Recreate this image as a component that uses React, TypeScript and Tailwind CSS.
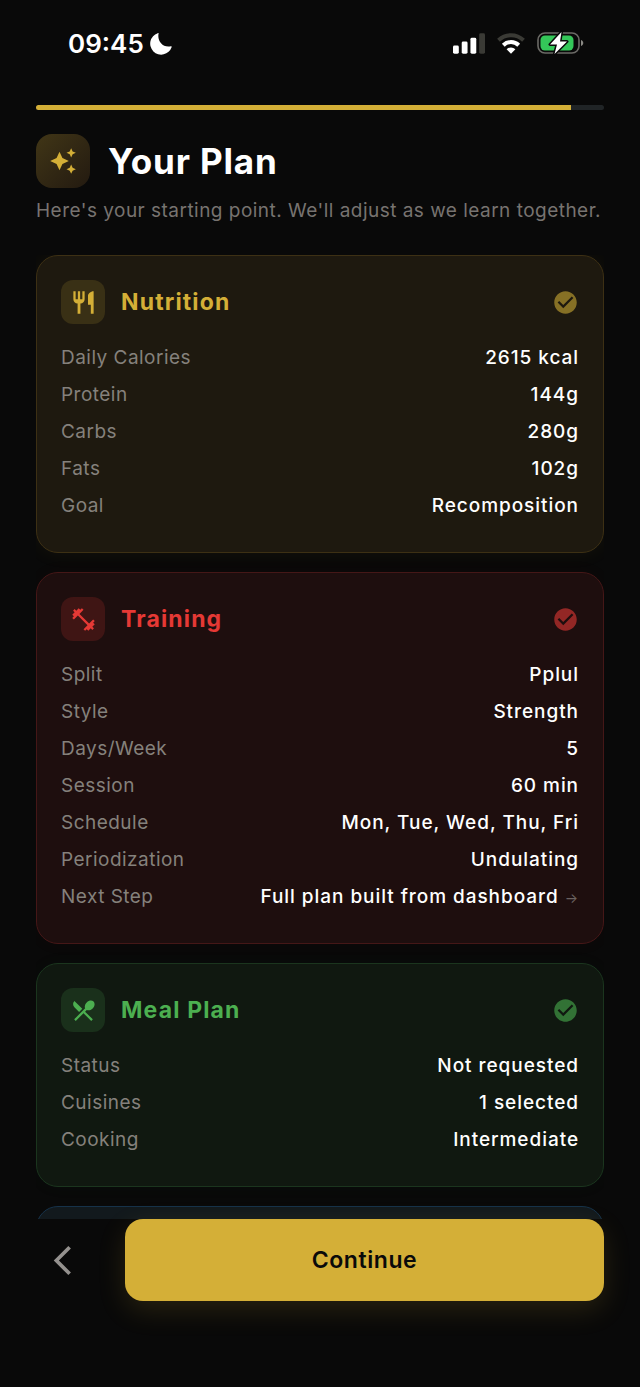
import type { ReactNode } from "react";
import {
  MdArrowBackIosNew,
  MdAutoAwesome,
  MdCheckCircle,
  MdFitnessCenter,
  MdRestaurant,
  MdRestaurantMenu,
} from "react-icons/md";

type Section = {
  title: string;
  icon: ReactNode;
  card: string;
  tile: string;
  accent: string;
  check: string;
  rows: { label: string; value: string; arrow?: boolean }[];
};

const sections: Section[] = [
  {
    title: "Nutrition",
    icon: <MdRestaurant className="size-[27px]" />,
    card: "border-[#3d3014] bg-[#1e190f] shadow-[0_0_20px_#d4af3710]",
    tile: "bg-[#393015]",
    accent: "text-[#d4af37]",
    check: "text-[#867025]",
    rows: [
      { label: "Daily Calories", value: "2615 kcal" },
      { label: "Protein", value: "144g" },
      { label: "Carbs", value: "280g" },
      { label: "Fats", value: "102g" },
      { label: "Goal", value: "Recomposition" },
    ],
  },
  {
    title: "Training",
    icon: <MdFitnessCenter className="size-[27px]" />,
    card: "border-[#451717] bg-[#1e0e0e] shadow-[0_0_20px_#e5393508]",
    tile: "bg-[#3f1514]",
    accent: "text-[#e53935]",
    check: "text-[#932725]",
    rows: [
      { label: "Split", value: "Pplul" },
      { label: "Style", value: "Strength" },
      { label: "Days/Week", value: "5" },
      { label: "Session", value: "60 min" },
      { label: "Schedule", value: "Mon, Tue, Wed, Thu, Fri" },
      { label: "Periodization", value: "Undulating" },
      { label: "Next Step", value: "Full plan built from dashboard", arrow: true },
    ],
  },
  {
    title: "Meal Plan",
    icon: <MdRestaurantMenu className="size-[27px]" />,
    card: "border-[#1b351e] bg-[#101810] shadow-[0_0_20px_#4caf5008]",
    tile: "bg-[#1a301b]",
    accent: "text-[#4caf50]",
    check: "text-[#327235]",
    rows: [
      { label: "Status", value: "Not requested" },
      { label: "Cuisines", value: "1 selected" },
      { label: "Cooking", value: "Intermediate" },
    ],
  },
];

function StatusBar() {
  return (
    <div className="flex h-[105px] shrink-0 items-start justify-between pt-7 pr-5 pl-8">
      <div className="flex items-center gap-1.5">
        <span className="text-[26px] leading-8 font-semibold">09:45</span>
        <svg className="size-[22px]" viewBox="0 0 22 22" fill="currentColor">
          <path d="M8.6.6C7 7.9 12.6 15.2 21 13.3c.6-.1.9.3.6.9A11 11 0 1 1 7.7.2c.6-.2 1 0 .9.4Z" />
        </svg>
      </div>
      <div className="flex h-[30px] items-center gap-3">
        <svg className="h-[21px] w-8" viewBox="0 0 33 21" fill="currentColor">
          <rect x="0" y="12.5" width="6" height="8.5" rx="1.5" />
          <rect x="9" y="8.5" width="6" height="12.5" rx="1.5" />
          <rect x="18" y="4.5" width="6" height="16.5" rx="1.5" />
          <rect x="27" y="0" width="6" height="21" rx="1.5" fill="#3a3a35" />
        </svg>
        <svg className="h-[21px] w-[28px]" viewBox="0 0 28 21" fill="none">
          <path d="M1.5 7.2a18 18 0 0 1 25 0" stroke="#3a3a35" strokeWidth="4" />
          <path d="M6.3 12.2a11 11 0 0 1 15.4 0" stroke="#fff" strokeWidth="4" />
          <path d="M9.6 16.2a6.5 6.5 0 0 1 8.8 0L14 20.8Z" fill="#fff" />
        </svg>
        <svg className="h-[24px] w-[47px]" viewBox="0 0 47 24">
          <rect x="1" y="2" width="41" height="20" rx="7" fill="none" stroke="#6b6a66" strokeWidth="1.6" />
          <path d="M44 9c3 1 3 5 0 6Z" fill="#8a8984" />
          <rect x="3.5" y="4.5" width="33" height="15" rx="4.5" fill="#34c759" />
          <path
            d="M24.5 1 13 13.5h7L17.500 23 30 10.5h-7Z"
            fill="#fff"
            stroke="#090909"
            strokeWidth="3"
            paintOrder="stroke"
            strokeLinejoin="round"
          />
        </svg>
      </div>
    </div>
  );
}

function PlanCard({ section }: { section: Section }) {
  return (
    <section className={`rounded-[22px] border px-6 pt-6 pb-[27px] ${section.card}`}>
      <div className={`flex items-center gap-4 ${section.accent}`}>
        <div className={`flex size-11 items-center justify-center rounded-xl ${section.tile}`}>
          {section.icon}
        </div>
        <h2 className="flex-1 text-[23px] leading-7 font-bold tracking-wider">{section.title}</h2>
        <MdCheckCircle className={`size-[27px] ${section.check}`} />
      </div>

      <dl className="mt-4 text-[19px]">
        {section.rows.map((row) => (
          <div key={row.label} className="flex h-[37px] items-center justify-between">
            <dt className="tracking-wide text-[#85817c]">{row.label}</dt>
            <dd className="flex items-center gap-1.5 font-medium tracking-wider">
              {row.value}
              {row.arrow && <span className="text-sm font-normal text-[#6b6260]">→</span>}
            </dd>
          </div>
        ))}
      </dl>
    </section>
  );
}

export default function App() {
  return (
    <main className="flex h-screen flex-col bg-[#090909] px-9 font-['Inter',sans-serif] text-white">
      <StatusBar />

      {/* Progress */}
      <div className="h-[5px] shrink-0 overflow-hidden rounded-full bg-[#202426]">
        <div className="h-full bg-[#d4af37]" style={{ width: "94.2%" }} />
      </div>

      {/* Header */}
      <header className="mt-6 shrink-0">
        <div className="flex items-center gap-[18px]">
          <div className="flex size-[54px] items-center justify-center rounded-2xl bg-linear-to-br from-[#413616] to-[#231a10] text-[#d4af37]">
            <MdAutoAwesome className="size-7" />
          </div>
          <h1 className="text-[35px] leading-10 font-bold tracking-wide">Your Plan</h1>
        </div>
        <p className="mt-2 text-[19px] leading-[30px] tracking-wide whitespace-nowrap text-[#777370]">
          Here's your starting point. We'll adjust as we learn together.
        </p>
      </header>

      {/* Plan cards */}
      <div className="mt-[29px] flex min-h-0 flex-1 flex-col gap-[19px] overflow-y-auto [scrollbar-width:none] *:shrink-0">
        {sections.map((section) => (
          <PlanCard key={section.title} section={section} />
        ))}
        <section className="h-56 rounded-[22px] border border-[#16324a] bg-[#12191d]" />
      </div>

      {/* Actions */}
      <footer className="flex shrink-0 items-center gap-9 pb-[86px]">
        <button aria-label="Back" className="flex size-[53px] items-center justify-center text-[#94918e]">
          <MdArrowBackIosNew className="size-[35px]" />
        </button>
        <button className="h-[82px] flex-1 rounded-[18px] bg-[#d4af37] text-[23px] font-semibold tracking-wide text-[#0a0a0a] shadow-[0_9px_28px_#d4af3726]">
          Continue
        </button>
      </footer>
    </main>
  );
}
